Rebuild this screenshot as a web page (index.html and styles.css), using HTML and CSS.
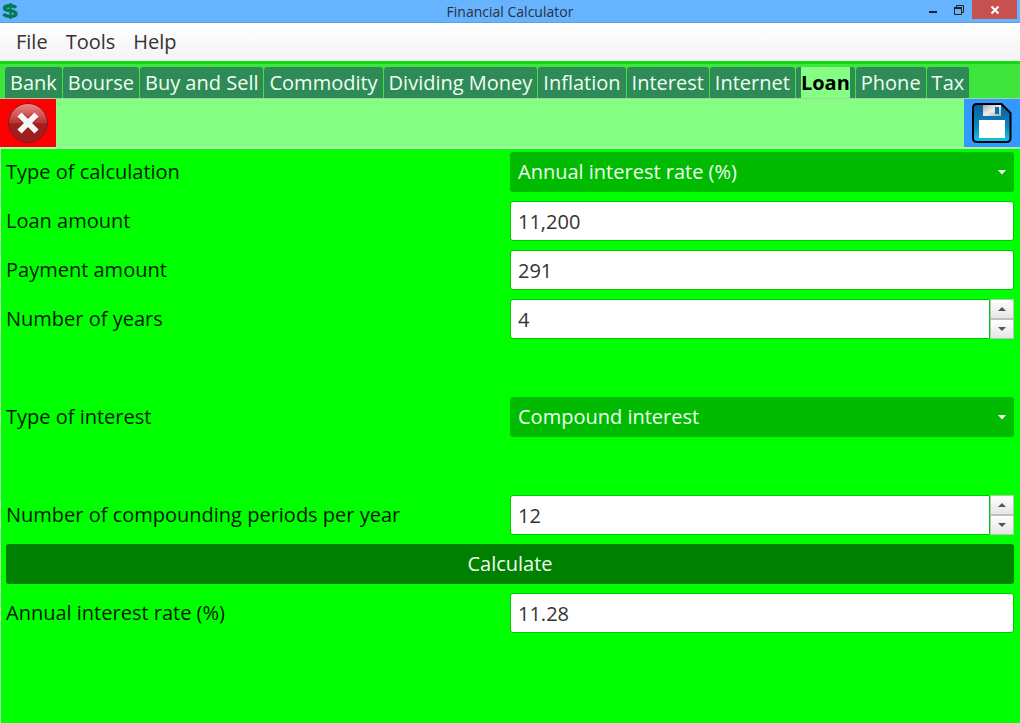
FILE: index.html
```html
<!DOCTYPE html>
<html lang="en">
<head>
<meta charset="utf-8">
<title>Financial Calculator</title>
<link rel="stylesheet" href="styles.css">
</head>
<body>
<div class="window">
  <header class="titlebar">
    <svg class="app-icon" width="18" height="18" viewBox="0 0 18 18" aria-hidden="true">
      <path d="M15 5.800C13.500 3.900 11.500 3.700 9 3.700C5.500 3.700 3.500 4.700 3.500 6.200C3.500 8 6 8.300 9 8.700C12.500 9.200 15 9.700 15 11.800C15 13.600 12.500 14.400 9 14.400C6 14.400 4 13.800 2.500 12" fill="none" stroke="#007a50" stroke-width="3.400"/>
      <path d="M9.500 1v16" stroke="#007a50" stroke-width="2"/>
    </svg>
    <h1 class="title">Financial Calculator</h1>
    <div class="window-buttons">
      <button class="win-btn" type="button" aria-label="Minimize"><svg width="10" height="12" viewBox="0 0 10 12"><path d="M1 7h8v2H1z" fill="#222"/></svg></button>
      <button class="win-btn" type="button" aria-label="Restore"><svg width="12" height="12" viewBox="0 0 12 12" fill="none" stroke="#222"><path d="M3.500 3V1.500h7v7H9"/><path d="M1.500 4h7v6.500h-7z"/><path d="M1 4h8" stroke-width="2"/></svg></button>
      <button class="win-btn win-close" type="button" aria-label="Close"><svg width="10" height="10" viewBox="0 0 10 10"><path d="M1.500 1.500l7 7M8.500 1.500l-7 7" stroke="#fff" stroke-width="2"/></svg></button>
    </div>
  </header>

  <nav class="menubar" aria-label="Main menu">
    <button class="menu" type="button">File</button>
    <button class="menu" type="button">Tools</button>
    <button class="menu" type="button">Help</button>
  </nav>

  <div class="tabs" role="tablist">
    <button class="tab" role="tab" type="button">Bank</button>
    <button class="tab" role="tab" type="button">Bourse</button>
    <button class="tab" role="tab" type="button">Buy and Sell</button>
    <button class="tab" role="tab" type="button">Commodity</button>
    <button class="tab" role="tab" type="button">Dividing Money</button>
    <button class="tab" role="tab" type="button">Inflation</button>
    <button class="tab" role="tab" type="button">Interest</button>
    <button class="tab" role="tab" type="button">Internet</button>
    <button class="tab tab-active" role="tab" type="button" aria-selected="true"><span class="tab-label">Loan</span></button>
    <button class="tab" role="tab" type="button">Phone</button>
    <button class="tab" role="tab" type="button">Tax</button>
  </div>

  <div class="toolbar">
    <button class="tool tool-close" type="button" aria-label="Close tab">
      <svg width="42" height="42" viewBox="0 0 42 42">
        <defs><linearGradient id="ball" x1="0" y1="0" x2="0" y2="1"><stop offset="0" stop-color="#e88"/><stop offset=".5" stop-color="#bc3030"/><stop offset=".52" stop-color="#a31c1c"/><stop offset="1" stop-color="#9c2020"/></linearGradient></defs>
        <circle cx="21" cy="21" r="19.500" fill="url(#ball)" stroke="#8a1818"/>
        <path d="M14 14l14 14M28 14L14 28" stroke="#7c1010" stroke-width="8" opacity=".4"/>
        <path d="M12.500 12.500l17 17M29.500 12.500l-17 17" stroke="#f5f5f5" stroke-width="6"/>
      </svg>
    </button>
    <button class="tool tool-save" type="button" aria-label="Save">
      <svg width="42" height="42" viewBox="0 0 42 42">
        <defs>
          <linearGradient id="disk" x1="0" y1="0" x2="0" y2="1"><stop offset="0" stop-color="#0a5f9e"/><stop offset=".6" stop-color="#0a86c0"/><stop offset="1" stop-color="#14c8e8"/></linearGradient>
          <linearGradient id="metal" x1="0" y1="0" x2="1" y2="1"><stop offset="0" stop-color="#a8a8b4"/><stop offset=".5" stop-color="#eee"/><stop offset="1" stop-color="#a8a8b4"/></linearGradient>
        </defs>
        <path d="M6 2h24.500l9 9V36q0 4-4 4H6q-4 0-4-4V6q0-4 4-4z" fill="url(#disk)" stroke="#000" stroke-width="2" stroke-linejoin="round"/>
        <path d="M12 3h18v11H12z" fill="url(#metal)"/>
        <path d="M24 5h4v7h-4z" fill="#0b6f9f"/>
        <path d="M8 18h26v18H8z" fill="#fff"/>
      </svg>
    </button>
  </div>

  <main class="panel">
    <form class="form">
      <div class="row">
        <label for="calc-type">Type of calculation</label>
        <div class="select-box">
          <select id="calc-type" class="control select"><option>Annual interest rate (%)</option></select>
          <svg class="caret" width="8" height="5" viewBox="0 0 8 5"><path d="M0 0h8L4 4.500z" fill="#fff"/></svg>
        </div>
      </div>
      <div class="row">
        <label for="amount">Loan amount</label>
        <input id="amount" class="control field" type="text" value="11,200">
      </div>
      <div class="row">
        <label for="payment">Payment amount</label>
        <input id="payment" class="control field" type="text" value="291">
      </div>
      <div class="row">
        <label for="years">Number of years</label>
        <div class="spinner">
          <input id="years" class="control field spinner-field" type="number" value="4">
          <div class="steps">
            <button class="step" type="button" aria-label="More years"><svg width="8" height="4" viewBox="0 0 8 4"><path d="M0 4h8L4 0z" fill="#555"/></svg></button>
            <button class="step" type="button" aria-label="Fewer years"><svg width="8" height="4" viewBox="0 0 8 4"><path d="M0 0h8L4 4z" fill="#555"/></svg></button>
          </div>
        </div>
      </div>
      <div class="row"></div>
      <div class="row">
        <label for="interest-type">Type of interest</label>
        <div class="select-box">
          <select id="interest-type" class="control select"><option>Compound interest</option></select>
          <svg class="caret" width="8" height="5" viewBox="0 0 8 5"><path d="M0 0h8L4 4.500z" fill="#fff"/></svg>
        </div>
      </div>
      <div class="row"></div>
      <div class="row">
        <label for="periods">Number of compounding periods per year</label>
        <div class="spinner">
          <input id="periods" class="control field spinner-field" type="number" value="12">
          <div class="steps">
            <button class="step" type="button" aria-label="More periods"><svg width="8" height="4" viewBox="0 0 8 4"><path d="M0 4h8L4 0z" fill="#555"/></svg></button>
            <button class="step" type="button" aria-label="Fewer periods"><svg width="8" height="4" viewBox="0 0 8 4"><path d="M0 0h8L4 4z" fill="#555"/></svg></button>
          </div>
        </div>
      </div>
      <button class="calculate" type="button">Calculate</button>
      <div class="row">
        <label for="rate">Annual interest rate (%)</label>
        <input id="rate" class="control field" type="text" value="11.28" readonly>
      </div>
    </form>
  </main>
</div>
</body>
</html>
```
FILE: styles.css
```css
* { box-sizing: border-box; }
body {
  margin: 0;
  font-family: "Open Sans", "Noto Sans", sans-serif;
  font-size: 20px;
  line-height: 28px;
  color: #001a00;
}
button, input, select { font: inherit; color: inherit; margin: 0; border: 0; padding: 0; }
svg { display: block; }
.window { display: flex; flex-direction: column; min-height: 100vh; }

.titlebar {
  display: grid;
  grid-template-columns: 1fr auto 1fr;
  height: 23px;
  background: #66b3ff;
  border-bottom: 1px solid #5b9fe0;
}
.app-icon { margin: 2px 0 0 1px; }
.title { margin: 0; font-size: 14px; font-weight: 400; line-height: 23px; color: #2b3038; }
.window-buttons { display: flex; justify-content: flex-end; padding-right: 3px; }
.win-btn { display: flex; align-items: center; justify-content: center; width: 26px; height: 19px; background: none; }
.win-close { width: 45px; background: #c75050; }

.menubar {
  display: flex;
  gap: 18px;
  height: 38px;
  padding: 0 16px;
  background: linear-gradient(#fff, #f3f3f3);
}
.menu { background: none; color: #333; }

.tabs {
  display: flex;
  gap: 1px;
  height: 38px;
  padding: 3px 5px 0;
  background: #3de53d;
  border-top: 3px solid #12d812;
  border-bottom: 1px solid #a9cfa9;
}
.tab {
  padding: 0 5px;
  background: #2e8b57;
  color: #f0fff0;
  border-radius: 3px 3px 0 0;
  white-space: nowrap;
}
.tab-label { display: block; line-height: 31px; background: #84ff84; color: #000; font-weight: 700; }

.toolbar {
  display: flex;
  justify-content: space-between;
  height: 50px;
  background: #84ff84;
  border-bottom: 2px solid #b4f0b4;
}
.tool { display: flex; align-items: center; justify-content: center; width: 56px; height: 48px; }
.tool-close { background: #f00; }
.tool-save { background: #3399ff; }

.panel { flex: 1; padding: 3px 6px 3px 5px; background: #0f0; border-left: 1px solid #b4f0b4; }
.form { display: flex; flex-direction: column; gap: 9px; }
.row { display: grid; grid-template-columns: 1fr 1fr; align-items: center; min-height: 40px; }
.control { display: block; width: 100%; height: 40px; padding: 0 8px; border-radius: 3px; }
.field { background: #fff; color: #333; border: 1px solid #00c800; padding: 0 7px; }
.select-box { position: relative; }
.select { appearance: none; background: #00bb00; color: #f0fff0; }
.caret { position: absolute; right: 8px; top: 18px; pointer-events: none; }
.spinner { display: flex; }
.spinner-field { flex: 1; min-width: 0; appearance: textfield; border-radius: 3px 0 0 3px; }
.spinner-field::-webkit-inner-spin-button { appearance: none; }
.steps { display: flex; flex-direction: column; width: 24px; }
.step {
  display: flex;
  flex: 1;
  align-items: center;
  justify-content: center;
  background: linear-gradient(#fff, #e6e6e6);
  border: 1px solid #b8c4b8;
}
.calculate { height: 40px; background: #008000; color: #f0fff0; border-radius: 3px; }
```
